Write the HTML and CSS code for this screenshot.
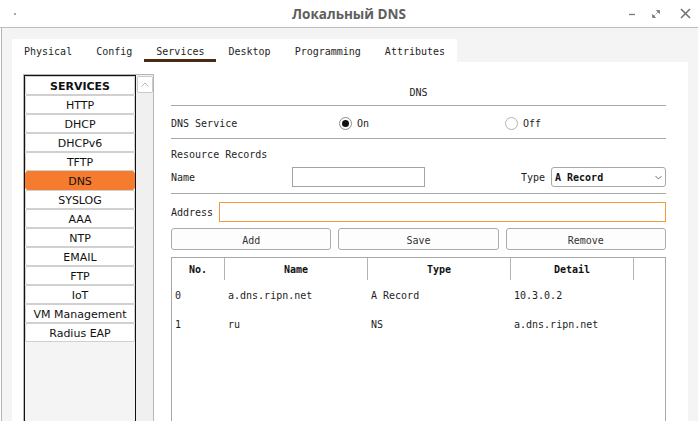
FILE: index.html
```html
<!DOCTYPE html>
<html>
<head>
<meta charset="utf-8">
<link rel="stylesheet" href="styles.css">
</head>
<body>
<div class="titlebar">
  <span class="dot"></span>
  <div class="title">Локальный DNS</div>
  <div class="controls">
    <svg class="ic-min" width="8" height="10" viewBox="0 0 8 10"><path d="M1 5.5h6" stroke="#7a7a7a" stroke-width="1.3"/></svg>
    <svg class="ic-restore" width="10" height="10" viewBox="0 0 10 10"><path d="M5.5 1.5h3v3z" fill="#7a7a7a" stroke="#7a7a7a" stroke-width="0.8"/><path d="M1.5 5.5v3h3z" fill="#7a7a7a" stroke="#7a7a7a" stroke-width="0.8"/><path d="M5 5L7 3M3 7l1.5-1.5" stroke="#9a9a9a" stroke-width="0.8"/></svg>
    <svg class="ic-close" width="11" height="11" viewBox="0 0 11 11"><path d="M1 1L10 10M10 1L1 10" stroke="#6e6e6e" stroke-width="1.5"/></svg>
  </div>
</div>
<div class="window">
  <div class="tabs">
    <div class="tab">Physical</div>
    <div class="tab">Config</div>
    <div class="tab active">Services</div>
    <div class="tab">Desktop</div>
    <div class="tab">Programming</div>
    <div class="tab">Attributes</div>
  </div>
  <div class="panel">
    <div class="sidebar">
      <div class="list">
        <div class="item head">SERVICES</div>
        <div class="item">HTTP</div>
        <div class="item">DHCP</div>
        <div class="item">DHCPv6</div>
        <div class="item">TFTP</div>
        <div class="item sel">DNS</div>
        <div class="item">SYSLOG</div>
        <div class="item">AAA</div>
        <div class="item">NTP</div>
        <div class="item">EMAIL</div>
        <div class="item">FTP</div>
        <div class="item">IoT</div>
        <div class="item">VM Management</div>
        <div class="item">Radius EAP</div>
      </div>
      <div class="scroll">
        <div class="scroll-up"><svg width="8" height="5" viewBox="0 0 8 5"><path d="M0.5 4.5L4 1l3.5 3.5" fill="none" stroke="#b8b8b8" stroke-width="1"/></svg></div>
      </div>
    </div>
    <div class="content">
      <div class="sec-title">DNS</div>
      <div class="service-row">
        <div>DNS Service</div>
        <div class="radio-group"><span class="radio on"></span><span>On</span></div>
        <div class="radio-group"><span class="radio"></span><span>Off</span></div>
      </div>
      <div class="rr-title">Resource Records</div>
      <div class="name-row">
        <div class="lbl-name">Name</div>
        <div class="input name-input"></div>
        <div class="lbl-type">Type</div>
        <div class="select"><span>A Record</span><svg width="7" height="5" viewBox="0 0 7 5"><path d="M0.5 1L3.5 4L6.5 1" fill="none" stroke="#666" stroke-width="0.9"/></svg></div>
      </div>
      <div class="addr-row">
        <div>Address</div>
        <div class="input addr-input"></div>
      </div>
      <div class="buttons">
        <div class="btn">Add</div>
        <div class="btn">Save</div>
        <div class="btn">Remove</div>
      </div>
      <div class="table">
        <div class="thead">
          <div class="th">No.</div>
          <div class="th">Name</div>
          <div class="th">Type</div>
          <div class="th">Detail</div>
          <div class="th last"></div>
        </div>
        <div class="tbody">
          <div class="tr"><div class="td">0</div><div class="td">a.dns.ripn.net</div><div class="td">A Record</div><div class="td">10.3.0.2</div><div class="td"></div></div>
          <div class="tr"><div class="td">1</div><div class="td">ru</div><div class="td">NS</div><div class="td">a.dns.ripn.net</div><div class="td"></div></div>
        </div>
      </div>
    </div>
  </div>
</div>
</body>
</html>
```

FILE: styles.css
```css
html, body {
  margin: 0;
  padding: 0;
}
body {
  width: 698px;
  height: 421px;
  overflow: hidden;
  background: #ffffff;
  font-family: "DejaVu Sans Mono", monospace;
  font-size: 10px;
  color: #1e1e1e;
}

/* title bar */
.titlebar {
  height: 27px;
  border-bottom: 1px solid #bdbdbd;
  display: grid;
  grid-template-columns: 1fr auto 1fr;
  align-items: center;
  background: #ffffff;
}
.dot {
  justify-self: start;
  width: 2px;
  height: 2px;
  border-radius: 1px;
  background: #8a8a8a;
  margin-left: 14px;
}
.title {
  font-family: "Open Sans", sans-serif;
  font-weight: 700;
  font-size: 13.5px;
  color: #5e5e5e;
}
.controls {
  justify-self: end;
  display: flex;
  align-items: center;
  padding-right: 7px;
}
.ic-restore { margin-left: 15px; }
.ic-close { margin-left: 19px; }

/* window */
.window {
  margin-left: 1px;
  border-left: 1px solid #b4b4b4;
  background: #f4f4f4;
  padding: 11px 0 0 10px;
  height: 393px;
  box-sizing: border-box;
  display: flex;
  flex-direction: column;
}
.tabs {
  display: flex;
  width: 445px;
  height: 23px;
  flex-shrink: 0;
  background: #ffffff;
}
.tab {
  padding: 2px 12px 0;
  display: flex;
  align-items: center;
}
.tab.active {
  box-shadow: inset 0 -3px 0 #4a2a12;
}

.panel {
  width: 676px;
  flex: 1;
  min-height: 0;
  box-sizing: border-box;
  background: #ffffff;
  display: flex;
  align-items: stretch;
  gap: 17px;
  padding: 12px 0 0 11px;
  overflow: hidden;
}

/* sidebar */
.sidebar {
  width: 131px;
  box-sizing: border-box;
  border: 1px solid #b6b6b6;
  border-bottom: none;
  display: flex;
  flex-shrink: 0;
}
.list {
  width: 112px;
  box-sizing: border-box;
  border: 1px solid #111111;
  border-bottom: none;
  background: #f4f4f4;
  font-family: "DejaVu Sans", sans-serif;
  font-size: 11px;
  color: #111;
}
.item {
  height: 19px;
  box-sizing: border-box;
  border: 1px solid #d0d0d0;
  border-radius: 2px;
  background: #ffffff;
  display: flex;
  align-items: center;
  justify-content: center;
  padding-top: 2px;
}
.item.head {
  font-weight: 700;
}
.item.sel {
  background: #f57b2e;
  border-color: #f57b2e;
  border-radius: 3px;
}
.scroll {
  flex: 1;
  background: #f0f0f0;
  padding: 1px 0 0 1px;
}
.scroll-up {
  width: 16px;
  height: 17px;
  box-sizing: border-box;
  border: 1px solid #cacaca;
  border-radius: 2px;
  background: #ffffff;
  display: flex;
  align-items: center;
  justify-content: center;
}

/* content */
.content {
  width: 495px;
  flex-shrink: 0;
  display: flex;
  flex-direction: column;
}
.sec-title {
  text-align: center;
  line-height: 14px;
  padding: 12px 0 5px;
  border-bottom: 1px solid #a8a8a8;
}
.service-row {
  height: 30px;
  padding-top: 2px;
  display: grid;
  grid-template-columns: 168px 166px 1fr;
  align-items: center;
  border-bottom: 1px solid #a8a8a8;
}
.radio-group {
  display: flex;
  align-items: center;
  gap: 5px;
}
.radio {
  width: 13px;
  height: 13px;
  box-sizing: border-box;
  border: 1px solid #b4b4b4;
  border-radius: 50%;
  background: #ffffff;
  display: flex;
  align-items: center;
  justify-content: center;
}
.radio.on {
  border-color: #8c8c8c;
}
.radio.on::after {
  content: "";
  width: 7px;
  height: 7px;
  border-radius: 50%;
  background: #111111;
}
.rr-title {
  margin-top: 9px;
  line-height: 14px;
}
.name-row {
  margin-top: 5px;
  padding-bottom: 6px;
  border-bottom: 1px solid #a8a8a8;
  display: flex;
  align-items: center;
  height: 20px;
}
.lbl-name {
  width: 121px;
}
.input {
  height: 20px;
  box-sizing: border-box;
  border: 1px solid #a4a4a4;
  background: #ffffff;
}
.name-input {
  width: 133px;
}
.lbl-type {
  margin-left: auto;
  margin-right: 6px;
}
.select {
  width: 115px;
  height: 20px;
  box-sizing: border-box;
  border: 1px solid #a8a8a8;
  border-radius: 3px;
  background: #ffffff;
  display: flex;
  align-items: center;
  justify-content: space-between;
  padding: 0 3px 0 3px;
  font-weight: 700;
  color: #111;
}
.addr-row {
  margin-top: 8px;
  display: flex;
  align-items: center;
  gap: 6px;
  height: 20px;
}
.addr-input {
  flex: 1;
  border-color: #f29b3e;
}
.buttons {
  margin-top: 6px;
  display: grid;
  grid-template-columns: repeat(3, 1fr);
  gap: 7px;
}
.btn {
  height: 22px;
  box-sizing: border-box;
  border: 1px solid #ababab;
  border-radius: 3px;
  background: #fdfdfd;
  display: flex;
  align-items: center;
  justify-content: center;
  padding-top: 2px;
  color: #333;
}
.table {
  margin-top: 7px;
  flex: 1;
  box-sizing: border-box;
  border: 1px solid #a8a8a8;
  border-bottom: none;
  background: #ffffff;
}
.thead, .tr {
  display: grid;
  grid-template-columns: 53px 143px 143px 123px 31px;
}
.thead {
  height: 22px;
}
.th {
  border-right: 1px solid #b4b4b4;
  display: flex;
  align-items: center;
  justify-content: center;
  font-weight: 700;
  color: #111;
}
.th.last {
  border-right: none;
}
.tbody {
  padding-top: 1px;
}
.tr {
  height: 29px;
  align-items: center;
}
.td {
  padding-left: 3px;
  white-space: nowrap;
}
```
